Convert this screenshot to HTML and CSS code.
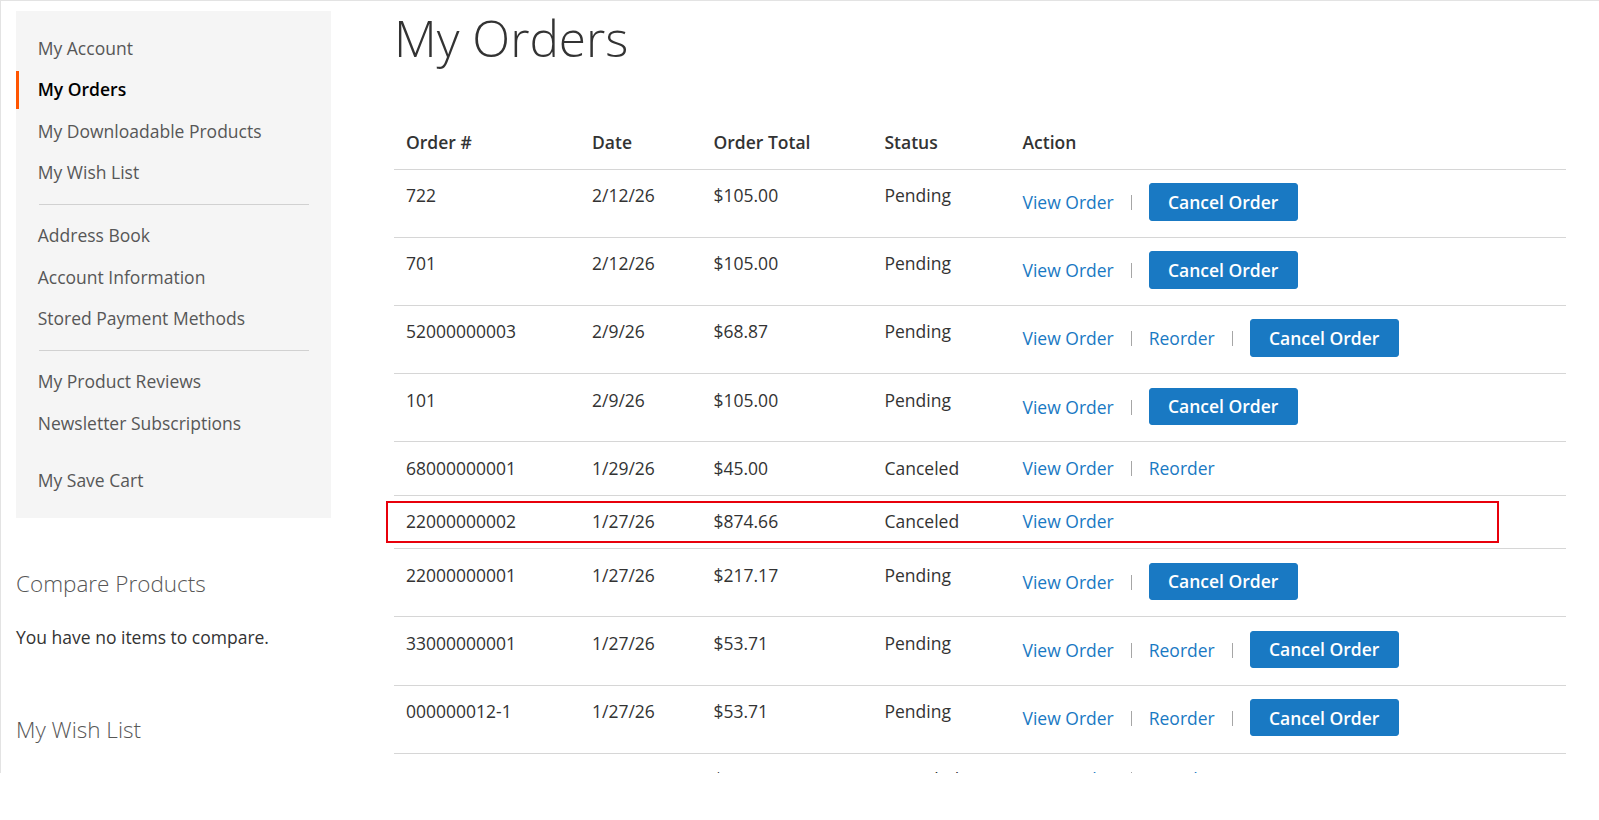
FILE: index.html
```html
<!DOCTYPE html>
<html lang="en">
<head>
<meta charset="utf-8">
<title>My Orders</title>
<link rel="stylesheet" href="styles.css">
</head>
<body>
<div class="viewport">
  <aside class="sidebar">
    <nav class="account-nav">
      <ul class="nav-list">
        <li class="nav-item"><a href="#">My Account</a></li>
        <li class="nav-item current"><strong>My Orders</strong></li>
        <li class="nav-item"><a href="#">My Downloadable Products</a></li>
        <li class="nav-item"><a href="#">My Wish List</a></li>
        <li class="delimiter"></li>
        <li class="nav-item"><a href="#">Address Book</a></li>
        <li class="nav-item"><a href="#">Account Information</a></li>
        <li class="nav-item"><a href="#">Stored Payment Methods</a></li>
        <li class="delimiter"></li>
        <li class="nav-item"><a href="#">My Product Reviews</a></li>
        <li class="nav-item"><a href="#">Newsletter Subscriptions</a></li>
        <li class="nav-item"><a href="#" class="empty-link"></a></li>
        <li class="nav-item"><a href="#">My Save Cart</a></li>
      </ul>
    </nav>
    <div class="block block-compare">
      <div class="block-title">Compare Products</div>
      <div class="block-content">You have no items to compare.</div>
    </div>
    <div class="block block-wishlist">
      <div class="block-title">My Wish List</div>
    </div>
  </aside>
  <main class="main">
    <h1 class="page-title">My Orders</h1>
    <table class="orders">
      <colgroup>
        <col class="c-id"><col class="c-date"><col class="c-total"><col class="c-status"><col class="c-action">
      </colgroup>
      <thead>
        <tr><th>Order #</th><th>Date</th><th>Order Total</th><th>Status</th><th>Action</th></tr>
      </thead>
      <tbody>
        <tr><td>722</td><td>2/12/26</td><td>$105.00</td><td>Pending</td><td class="actions"><a href="#" class="link">View Order</a><span class="sep"></span><a href="#" class="btn">Cancel Order</a></td></tr>
        <tr><td>701</td><td>2/12/26</td><td>$105.00</td><td>Pending</td><td class="actions"><a href="#" class="link">View Order</a><span class="sep"></span><a href="#" class="btn">Cancel Order</a></td></tr>
        <tr><td>52000000003</td><td>2/9/26</td><td>$68.87</td><td>Pending</td><td class="actions"><a href="#" class="link">View Order</a><span class="sep"></span><a href="#" class="link">Reorder</a><span class="sep"></span><a href="#" class="btn">Cancel Order</a></td></tr>
        <tr><td>101</td><td>2/9/26</td><td>$105.00</td><td>Pending</td><td class="actions"><a href="#" class="link">View Order</a><span class="sep"></span><a href="#" class="btn">Cancel Order</a></td></tr>
        <tr><td>68000000001</td><td>1/29/26</td><td>$45.00</td><td>Canceled</td><td class="actions"><a href="#" class="link">View Order</a><span class="sep"></span><a href="#" class="link">Reorder</a></td></tr>
        <tr><td class="marked">22000000002<span class="highlight"></span></td><td>1/27/26</td><td>$874.66</td><td>Canceled</td><td class="actions"><a href="#" class="link">View Order</a></td></tr>
        <tr><td>22000000001</td><td>1/27/26</td><td>$217.17</td><td>Pending</td><td class="actions"><a href="#" class="link">View Order</a><span class="sep"></span><a href="#" class="btn">Cancel Order</a></td></tr>
        <tr><td>33000000001</td><td>1/27/26</td><td>$53.71</td><td>Pending</td><td class="actions"><a href="#" class="link">View Order</a><span class="sep"></span><a href="#" class="link">Reorder</a><span class="sep"></span><a href="#" class="btn">Cancel Order</a></td></tr>
        <tr><td>000000012-1</td><td>1/27/26</td><td>$53.71</td><td>Pending</td><td class="actions"><a href="#" class="link">View Order</a><span class="sep"></span><a href="#" class="link">Reorder</a><span class="sep"></span><a href="#" class="btn">Cancel Order</a></td></tr>
        <tr><td>000000010</td><td>1/27/26</td><td>$53.71</td><td>Canceled</td><td class="actions"><a href="#" class="link">View Order</a><span class="sep"></span><a href="#" class="link">Reorder</a></td></tr>
      </tbody>
    </table>
  </main>
</div>
</body>
</html>
```
FILE: styles.css
```css
* { box-sizing: border-box; }
html, body { margin: 0; padding: 0; background: #fff; }
body {
  font-family: "Open Sans", "Liberation Sans", Arial, sans-serif;
  font-size: 17.5px;
  line-height: 25px;
  color: #333;
}
a { text-decoration: none; }

.viewport {
  height: 773px;
  overflow: hidden;
  border-top: 1px solid #e3e3e3;
  border-left: 1px solid #e3e3e3;
  padding: 10px 0 0 15px;
  display: flex;
  align-items: flex-start;
}

.sidebar { flex: none; width: 315px; margin-right: 63px; }

.account-nav { background: #f5f5f5; padding: 18.75px 0; }
.nav-list { list-style: none; margin: 0; padding: 0; }
.nav-item + .nav-item { margin-top: 3.75px; }
.nav-item a, .nav-item strong {
  display: block;
  border-left: 3.75px solid transparent;
  padding: 6.25px 22.5px 6.25px 18.75px;
  color: #575757;
  font-weight: 400;
}
.nav-item .empty-link { height: 12.5px; padding-top: 0; padding-bottom: 0; }
.nav-item.current strong { border-left-color: #ff5501; color: #000; font-weight: 600; }
.delimiter { border-top: 1px solid #d1d1d1; margin: 12.5px 22.5px; height: 0; }

.block { margin-top: 50px; }
.block-title { font-size: 22.5px; line-height: 32px; font-weight: 300; color: #575757; }
.block-compare .block-content { margin-top: 25px; color: #333; }
.block-compare { margin-bottom: 64.25px; }
.block-wishlist { margin-top: 0; }

.main { flex: none; width: 1172px; }
.page-title {
  margin: 0 0 50.5px;
  font-size: 49.5px;
  line-height: 55px;
  font-weight: 300;
  color: #333;
}

.orders { width: 100%; table-layout: fixed; border-collapse: collapse; }
.c-id { width: 186px; }
.c-date { width: 121.5px; }
.c-total { width: 171px; }
.c-status { width: 138px; }
.orders th, .orders td {
  text-align: left;
  vertical-align: top;
  padding: 13.75px 12px;
  border-bottom: 1px solid #d6d6d6;
  white-space: nowrap;
}
.orders td { padding-top: 13.25px; padding-bottom: 14.25px; }
.orders th { font-weight: 600; color: #333; }
.orders td.marked { position: relative; }
.highlight {
  position: absolute;
  left: -8px;
  top: 4.7px;
  width: 1112.5px;
  height: 42px;
  border: 2px solid #e8000b;
  pointer-events: none;
}

.link { color: #1979c3; }
.sep {
  display: inline-block;
  width: 0;
  height: 15px;
  border-left: 1px solid #a6a6a6;
  margin: 0 17px;
  vertical-align: -1.25px;
}
.btn {
  display: inline-block;
  background: #1979c3;
  border: 1px solid #1979c3;
  color: #fff;
  font-weight: 600;
  line-height: 20px;
  padding: 7.75px 18.25px;
  border-radius: 3px;
  margin-bottom: 2.1px;
}
```
